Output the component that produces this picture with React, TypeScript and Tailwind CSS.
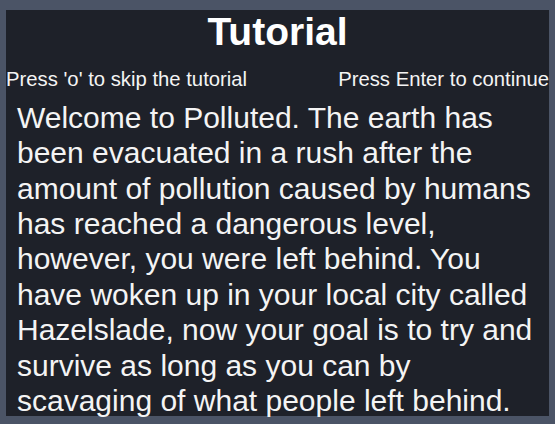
export default function App() {
  return (
    <div
      className="w-[555px] h-[424px] bg-[#4b5466] pt-[10px] pl-[6px]"
      style={{ fontFamily: '"Liberation Sans", Arial, sans-serif' }}
    >
      <div className="w-[543px] h-[406px] bg-[#1e2129] flex flex-col text-[#f4f4f4]">
        <div className="text-[39px] font-bold text-center leading-[44.8px] text-white">Tutorial</div>
        <div className="mt-[13px] flex justify-between text-[20.3px] leading-[23px]">
          <span>Press 'o' to skip the tutorial</span>
          <span>Press Enter to continue</span>
        </div>
        <p className="mt-[9px] pl-[11px] text-[30px] leading-[35.4px]">
          Welcome to Polluted. The earth has been evacuated in a rush after the amount of pollution caused by humans has
          reached a dangerous level, however, you were left behind. You have woken up in your local city called
          Hazelslade, now your goal is to try and survive as long as you can by scavaging of what people left behind.
        </p>
      </div>
    </div>
  );
}
